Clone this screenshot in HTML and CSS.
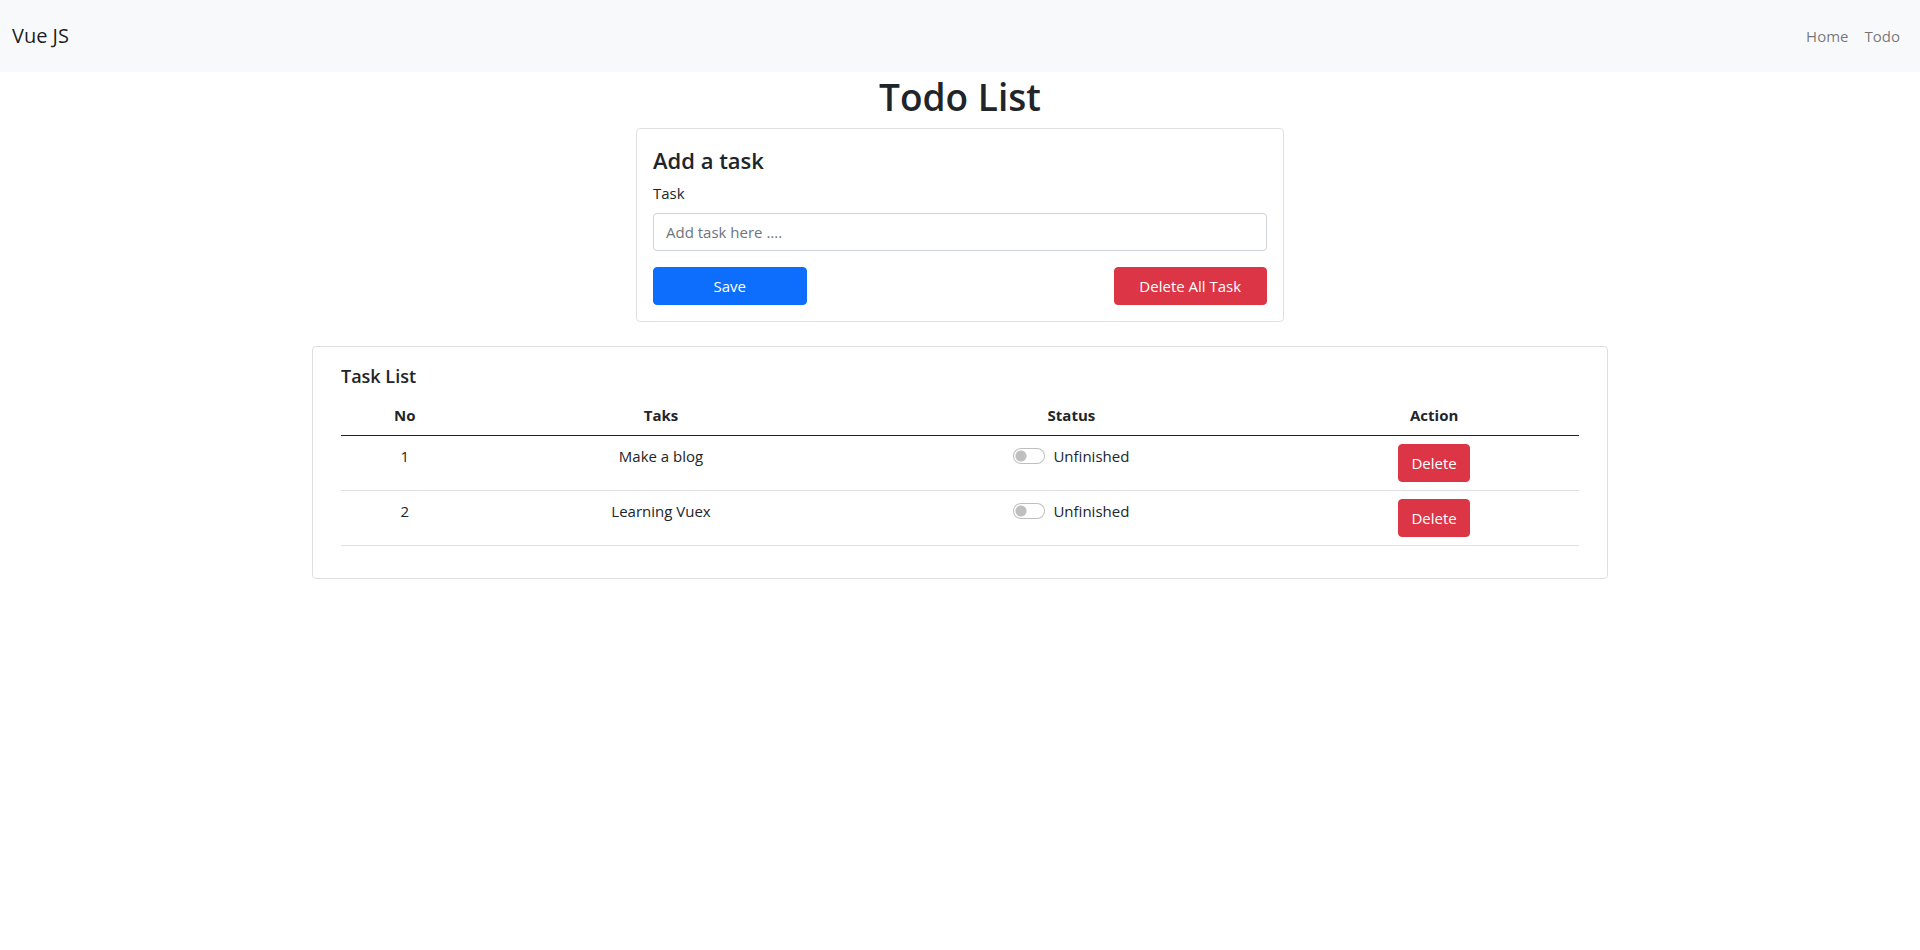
FILE: index.html
```html
<!DOCTYPE html>
<html lang="en">
<head>
  <meta charset="utf-8">
  <meta name="viewport" content="width=device-width, initial-scale=1">
  <title>Todo List</title>
  <link rel="stylesheet" href="styles.css">
</head>
<body>
  <nav class="navbar">
    <a class="navbar-brand" href="#">Vue JS</a>
    <ul class="navbar-nav">
      <li><a class="nav-link" href="#">Home</a></li>
      <li><a class="nav-link" href="#">Todo</a></li>
    </ul>
  </nav>
  <main class="container">
    <h1 class="page-title">Todo List</h1>
    <form class="card add-card">
      <h2 class="add-title">Add a task</h2>
      <label class="form-label" for="task">Task</label>
      <input class="form-control" id="task" type="text" placeholder="Add task here ....">
      <div class="form-actions">
        <button class="btn btn-primary" type="submit">Save</button>
        <button class="btn btn-danger" type="button">Delete All Task</button>
      </div>
    </form>
    <section class="card list-card">
      <h2 class="list-title">Task List</h2>
      <table class="table">
        <colgroup>
          <col class="col-no">
          <col class="col-task">
          <col class="col-status">
          <col class="col-action">
        </colgroup>
        <thead>
          <tr>
            <th scope="col">No</th>
            <th scope="col">Taks</th>
            <th scope="col">Status</th>
            <th scope="col">Action</th>
          </tr>
        </thead>
        <tbody>
          <tr>
            <td>1</td>
            <td>Make a blog</td>
            <td>
              <div class="form-switch">
                <input class="switch-input" id="status-1" type="checkbox" role="switch">
                <label for="status-1">Unfinished</label>
              </div>
            </td>
            <td><button class="btn btn-danger" type="button">Delete</button></td>
          </tr>
          <tr>
            <td>2</td>
            <td>Learning Vuex</td>
            <td>
              <div class="form-switch">
                <input class="switch-input" id="status-2" type="checkbox" role="switch">
                <label for="status-2">Unfinished</label>
              </div>
            </td>
            <td><button class="btn btn-danger" type="button">Delete</button></td>
          </tr>
        </tbody>
      </table>
    </section>
  </main>
</body>
</html>
```
FILE: styles.css
```css
*,
*::before,
*::after {
  box-sizing: border-box;
}

body {
  margin: 0;
  font-family: "Segoe UI", "Open Sans", "Noto Sans", sans-serif;
  font-size: 15px;
  line-height: 24px;
  color: #212529;
  background: #fff;
}

h1,
h2 {
  margin: 0 0 8px;
  font-weight: 600;
}

/* Navigation */
.navbar {
  display: flex;
  align-items: center;
  justify-content: space-between;
  min-height: 72px;
  padding: 8px 12px;
  background: #f8f9fb;
}

.navbar-brand {
  font-size: 20px;
  line-height: 30px;
  color: rgba(0, 0, 0, 0.9);
  text-decoration: none;
}

.navbar-nav {
  display: flex;
  margin: 0;
  padding: 0;
  list-style: none;
}

.nav-link {
  display: block;
  padding: 8px;
  color: rgba(0, 0, 0, 0.55);
  text-decoration: none;
}

/* Layout */
.container {
  max-width: 1320px;
  margin: 0 auto;
  padding: 0 12px;
}

.page-title {
  margin-bottom: 6px;
  font-size: 37px;
  line-height: 50px;
  text-align: center;
}

.card {
  border: 1px solid #dfdfdf;
  border-radius: 4px;
  background: #fff;
}

.add-card {
  width: 50%;
  min-width: 320px;
  margin: 0 auto;
  padding: 16px;
}

.add-title {
  margin-bottom: 6px;
  font-size: 22px;
  line-height: 30px;
}

.list-card {
  margin-top: 24px;
  padding: 16px 28px;
}

.list-title {
  margin-bottom: 6px;
  font-size: 18px;
  line-height: 26px;
}

/* Form */
.form-label {
  display: block;
  margin-bottom: 8px;
}

.form-control {
  display: block;
  width: 100%;
  padding: 6px 12px;
  border: 1px solid #ced4da;
  border-radius: 4px;
  font: inherit;
  color: #212529;
  background: #fff;
}

.form-control::placeholder {
  color: #6c757d;
  opacity: 1;
}

.form-actions {
  display: flex;
  justify-content: space-between;
  margin-top: 16px;
}

.form-actions .btn {
  width: 25%;
}

.btn {
  padding: 6px 12px;
  border: 1px solid transparent;
  border-radius: 4px;
  font: inherit;
  color: #fff;
  white-space: nowrap;
  cursor: pointer;
}

.btn-primary {
  border-color: #0d6efd;
  background: #0d6efd;
}

.btn-danger {
  border-color: #dc3545;
  background: #dc3545;
}

/* Task table */
.table {
  width: 100%;
  margin-bottom: 16px;
  border-collapse: separate;
  border-spacing: 0;
  table-layout: fixed;
  text-align: center;
}

.table th,
.table td {
  padding: 8px;
  border-bottom: 1px solid #dee2e6;
  vertical-align: top;
}

.table th {
  border-bottom-color: #212529;
  font-weight: 700;
}

.col-no {
  width: 10.3%;
}

.col-task {
  width: 31.1%;
}

.col-status {
  width: 35.2%;
}

.col-action {
  width: 23.4%;
}

.table .btn {
  display: block;
  margin: 0 auto;
}

.form-switch {
  display: flex;
  justify-content: center;
  gap: 8px;
}

.switch-input {
  appearance: none;
  width: 32px;
  height: 16px;
  margin: 4px 0 0;
  border: 1px solid rgba(0, 0, 0, 0.25);
  border-radius: 16px;
  background: radial-gradient(circle at 7px 7px, #bfbfbf 5px, transparent 6px) #fff;
}

.switch-input:checked {
  border-color: #0d6efd;
  background: radial-gradient(circle at 23px 7px, #fff 5px, transparent 6px) #0d6efd;
}
```
